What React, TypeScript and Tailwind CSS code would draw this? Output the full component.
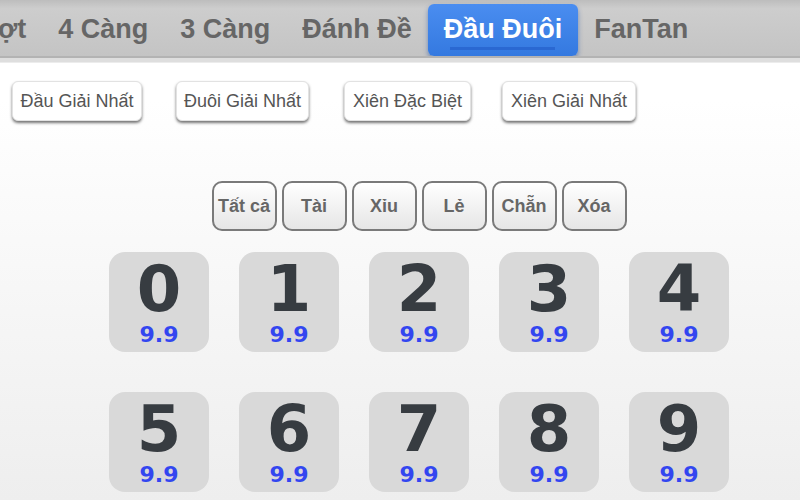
import React from 'react';

const tabs = ['Trượt', '4 Càng', '3 Càng', 'Đánh Đề', 'Đầu Đuôi', 'FanTan'];
const subTabs = [
  { label: 'Đầu Giải Nhất', cls: 'w-[130px] ml-[12px]' },
  { label: 'Đuôi Giải Nhất', cls: 'w-[133px] ml-[34px]' },
  { label: 'Xiên Đặc Biệt', cls: 'w-[127px] ml-[35px]' },
  { label: 'Xiên Giải Nhất', cls: 'w-[134px] ml-[31px]' },
];
const filters = ['Tất cả', 'Tài', 'Xỉu', 'Lẻ', 'Chẵn', 'Xóa'];
const digits = ['0', '1', '2', '3', '4', '5', '6', '7', '8', '9'];

export default function App() {
  return (
    <div
      className="w-[800px] h-[500px] overflow-hidden bg-gradient-to-b from-white from-20% to-[#eeeeee]"
      style={{ fontFamily: '"Liberation Sans", Arial, sans-serif' }}
    >
      {/* Top tab bar */}
      <div className="h-[58px] bg-gradient-to-b from-[#bdbdbd] via-[#cdcdcd] via-15% to-[#c4c4c4] border-b-2 border-[#b3b3b3] flex items-center overflow-hidden">
        <div className="flex items-center -ml-[63px] pt-[2px]">
          {tabs.map((t) => {
            const active = t === 'Đầu Đuôi';
            return active ? (
              <div
                key={t}
                className="relative h-[52px] mt-[2px] px-4 flex items-center rounded-md bg-gradient-to-b from-[#4a8df0] to-[#3479e0] shadow-[0_3px_5px_rgba(0,60,160,0.45)] text-white text-[27px] font-bold"
              >
                <span className="-mt-[2px]">{t}</span>
                <div className="absolute left-[22px] right-[23px] top-[43px] h-[3px] bg-[#2a68d2]" />
              </div>
            ) : (
              <div key={t} className="px-4 text-[27px] font-bold text-[#666666]">
                {t}
              </div>
            );
          })}
        </div>
      </div>
      <div className="h-[5px] bg-[#dedede] border-b border-[#ececec]" />

      {/* Sub tabs */}
      <div className="flex pt-[18px]">
        {subTabs.map((s) => (
          <button
            key={s.label}
            className={`${s.cls} h-[40px] rounded-md bg-white text-[18px] text-[#555555] shadow-[0_2px_3px_rgba(0,0,0,0.55)] border border-[#e2e2e2] whitespace-nowrap`}
          >
            {s.label}
          </button>
        ))}
      </div>

      {/* Filters */}
      <div className="flex justify-center gap-[5px] mt-[60px] pl-[38px]">
        {filters.map((f) => (
          <button
            key={f}
            className="w-[65px] h-[50px] rounded-[10px] border-2 border-[#7a7a7a] bg-gradient-to-b from-white to-[#e6e6e6] text-[18px] font-bold text-[#666666]"
          >
            {f}
          </button>
        ))}
      </div>

      {/* Digits */}
      <div className="grid grid-cols-5 gap-x-[30px] gap-y-[40px] w-[620px] ml-[109px] mt-[21px]">
        {digits.map((d) => (
          <div
            key={d}
            className="w-[100px] h-[100px] rounded-[16px] bg-[#d9d9d9] flex flex-col items-center"
            style={{ fontFamily: '"DejaVu Sans", Verdana, sans-serif' }}
          >
            <div className="text-[64px] font-bold leading-[48px] mt-[13px] text-[#373c41]">{d}</div>
            <div className="text-[22px] font-bold leading-[16px] mt-[14px] text-[#3346f0]">9.9</div>
          </div>
        ))}
      </div>
    </div>
  );
}
